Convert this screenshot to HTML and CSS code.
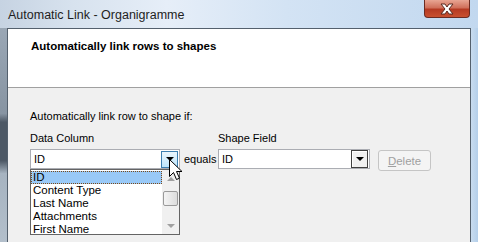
FILE: index.html
```html
<!DOCTYPE html>
<html lang="en">
<head>
  <meta charset="UTF-8" />
  <title>Automatic Link - Organigramme</title>
  <link rel="stylesheet" href="styles.css">
</head>
<body>

<div class="window">
  <div class="titlebar">
    <span class="title">Automatic Link - Organigramme</span>
    <span class="close-btn">
      <svg width="16" height="12" viewBox="0 0 16 12">
        <path d="M2 1h4l2 3 2-3h4l-4 5 4 5h-4l-2-3-2 3H2l4-5z" fill="#fff" stroke="#5a2a20" stroke-width="1"/>
      </svg>
    </span>
  </div>

  <div class="frame-row">
    <div class="frame-left"></div>

    <div class="client">
      <div class="header">
        <h1>Automatically link rows to shapes</h1>
      </div>

      <div class="content">
        <p class="intro">Automatically link row to shape if:</p>

        <div class="match-grid">
          <label class="lbl">Data Column</label>
          <span></span>
          <label class="lbl">Shape Field</label>
          <span></span>

          <div class="combo combo-open">
            <span class="combo-text">ID</span>
            <span class="drop-btn hot"><i class="tri"></i></span>

            <div class="droplist">
              <div class="items">
                <div class="item selected">ID</div>
                <div class="item">Content Type</div>
                <div class="item">Last Name</div>
                <div class="item">Attachments</div>
                <div class="item">First Name</div>
              </div>
              <div class="scrollbar">
                <span class="sb-arrow"><i class="tri tri-up"></i></span>
                <span class="sb-track">
                  <span class="sb-thumb"></span>
                </span>
                <span class="sb-arrow"><i class="tri tri-down"></i></span>
              </div>
            </div>

            <svg class="cursor" width="14" height="22" viewBox="0 0 14 22">
              <path d="M0.5 0.5v17l4-4 3 7 3-1.3-3-6.7h5.5z" fill="#fff" stroke="#000" stroke-width="1"/>
            </svg>
          </div>

          <span class="equals">equals</span>

          <div class="combo">
            <span class="combo-text">ID</span>
            <span class="drop-btn classic"><i class="tri"></i></span>
          </div>

          <button class="btn" disabled><u>D</u>elete</button>
        </div>
      </div>
    </div>

    <div class="frame-right"></div>
  </div>
</div>

</body>
</html>
```

FILE: styles.css
```css
body { margin: 0; width: 478px; height: 242px; overflow: hidden; font-family: "Liberation Sans", Arial, sans-serif; font-size: 11px; color: #000; }

.window { display: flex; flex-direction: column; height: 242px; }

.titlebar { height: 28px; display: flex; align-items: flex-start; justify-content: space-between; background: linear-gradient(to right, #c6d3e2 0%, #d7e2ee 15%, #e6eef8 35%, #d3e3f4 60%, #c2d8ef 100%); }
.title { padding: 8px 0 0 8px; font-size: 12.5px; color: #1e1e1e; }
.close-btn { width: 44px; height: 17px; margin-right: 8px; border: 1px solid #6b2b22; border-top: none; border-radius: 0 0 4px 4px; background: linear-gradient(to bottom, #e8a593 0%, #d0705b 45%, #b53a23 55%, #c9502f 100%); display: flex; align-items: center; justify-content: center; }

.frame-row { flex: 1; display: flex; }
.frame-left { width: 7px; background: linear-gradient(to bottom, #9aa7b5 0%, #8794a2 40%, #4d5865 44%, #4d5865 62%, #a6b3c0 68%, #b3bfcb 100%); }
.frame-right { width: 7px; background: linear-gradient(to right, #c9dcef, #b4cfea); }

.client { flex: 1; border: 1px solid #54606d; border-bottom: none; background: #f0f0f0; display: flex; flex-direction: column; }

.header { height: 58px; background: #fff; border-bottom: 1px solid #a0a0a0; }
.header h1 { margin: 0; padding: 11px 0 0 23px; font-size: 11.5px; font-weight: bold; }

.content { padding: 22px 0 0 22px; }
.intro { margin: 0 0 9px; line-height: 13px; }

.match-grid { display: grid; grid-template-columns: 150px 30px 152px 57px; column-gap: 4px; row-gap: 2px; align-items: center; }
.lbl { line-height: 13px; }

.combo { position: relative; height: 18px; border: 1px solid #abadb3; background: #fff; display: flex; align-items: center; justify-content: space-between; }
.combo-text { padding-left: 3px; }

.drop-btn { width: 15px; height: 15px; margin-right: 1px; display: flex; align-items: center; justify-content: center; }
.drop-btn.hot { border: 1px solid #3c7fb1; background: linear-gradient(to bottom, #eaf6fd, #bee6fd); }
.drop-btn.classic { border: 1px solid #404040; box-shadow: inset 1px 1px 0 #fff; background: #f0f0f0; height: 16px; }
.tri { width: 0; height: 0; border-left: 4px solid transparent; border-right: 4px solid transparent; border-top: 4px solid #000; }
.tri-up { border-top: none; border-bottom: 4px solid #a0a0a0; }
.tri-down { border-top-color: #a0a0a0; }

.equals { line-height: 13px; }

.btn { width: 53px; height: 21px; margin: 3px 0 0 4px; align-self: start; padding: 0; border: 1px solid #c5c5c5; border-radius: 3px; background: #f4f4f4; color: #a0a0a0; font-family: inherit; font-size: 11.5px; }

.droplist { position: absolute; left: -1px; top: 19px; width: 148px; height: 64px; border: 1px solid #646464; background: #fff; display: flex; }
.items { flex: 1; padding-top: 1px; }
.item { height: 13px; line-height: 13px; padding-left: 2px; font-size: 11.5px; }
.item.selected { background: #99c9f7; outline: 1px dotted #7a4a1a; outline-offset: -1px; }

.scrollbar { width: 17px; display: flex; flex-direction: column; background: #f0f0f0; }
.sb-arrow { height: 17px; display: flex; align-items: center; justify-content: center; }
.sb-track { flex: 1; display: flex; flex-direction: column; padding-top: 4px; }
.sb-thumb { height: 13px; margin: 0 1px; border: 1px solid #9a9a9a; border-radius: 2px; background: linear-gradient(to right, #f4f4f4, #dcdcdc); }

.cursor { position: absolute; left: 138px; top: 9px; }
```
